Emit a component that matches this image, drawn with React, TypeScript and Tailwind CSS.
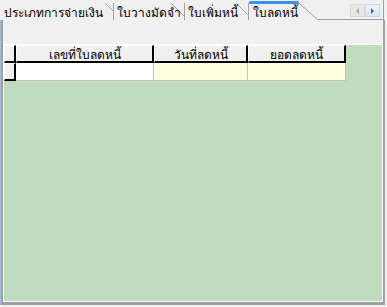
const tabs = [
  { label: "ประเภทการจ่ายเงิน", width: "w-[113px]", edge: "M105 3 L113 11", left: false },
  { label: "ใบวางมัดจำ", width: "w-[71px]", edge: "M58 3 L71 16", left: true },
  { label: "ใบเพิ่มหนี้", width: "w-[64px]", edge: "M52 3 L64 15", left: true },
];

const headers = [
  { label: "เลขที่ใบลดหนี้", width: "w-[138px]", cell: "bg-white" },
  { label: "วันที่ลดหนี้", width: "w-[94px]", cell: "bg-[#ffffe1]" },
  { label: "ยอดลดหนี้", width: "w-[98px]", cell: "bg-[#ffffe1]" },
];

function TabEdges({ d, left }: { d: string; left: boolean }) {
  return (
    <svg className="absolute inset-0 h-full w-full" aria-hidden="true">
      {left && <path d="M0.5 3 L0.5 20" stroke="#a0a0a0" strokeWidth="1" fill="none" />}
      <path d={d} stroke="#a0a0a0" strokeWidth="1" fill="none" />
    </svg>
  );
}

export default function App() {
  return (
    <div className="flex h-[307px] w-[387px] flex-col overflow-hidden bg-[#f0f0f0] font-['Tahoma','Noto_Sans','DejaVu_Sans',sans-serif] text-[12px] leading-none text-black">
      {/* tab strip */}
      <div className="flex h-[20px] shrink-0">
        {tabs.map((t) => (
          <div key={t.label} className={`relative ${t.width} h-[20px] shrink-0`}>
            <TabEdges d={t.edge} left={t.left} />
            <span className="absolute left-[4px] top-[7px] whitespace-nowrap text-[12px]">{t.label}</span>
          </div>
        ))}
        <div className="relative h-[20px] w-[70px] shrink-0">
          <svg className="absolute inset-0 h-full w-full" aria-hidden="true">
            <path d="M0.5 3 L0.5 20" stroke="#a0a0a0" strokeWidth="1" fill="none" />
            <path d="M51 3 L70 20" stroke="#a0a0a0" strokeWidth="1" fill="none" />
            <rect x="1" y="1" width="50" height="3" rx="1.5" fill="#3d8ee6" />
          </svg>
          <span className="absolute left-[5px] top-[7px] whitespace-nowrap text-[12px]">ใบลดหนี้</span>
        </div>
        <div className="flex h-[20px] w-[66px] shrink-0 items-start justify-end border-b border-r border-[#a0a0a0] pr-[3px] pt-[4px]">
          <div className="flex h-[13px] w-[15px] items-center justify-center border border-[#dadada] bg-[#e6e6e6]">
            <span className="h-0 w-0 border-y-[3px] border-r-[3px] border-y-transparent border-r-[#a6a6a6]" />
          </div>
          <div className="flex h-[13px] w-[15px] items-center justify-center border border-[#c9d6e6] bg-gradient-to-b from-[#eef4fb] to-[#d9e6f5]">
            <span className="h-0 w-0 border-y-[3px] border-l-[3px] border-y-transparent border-l-[#3c5fc0]" />
          </div>
        </div>
        <div className="flex-1" />
      </div>

      {/* panel */}
      <div className="flex flex-1">
        <div className="w-[1px] bg-[#aabed6]" />
        <div className="flex w-[384px] flex-col border-x-2 border-b-[3px] border-[#a0a0a0]">
          <div className="h-[24px] shrink-0 bg-[#f0f0f0]" />
          <div className="flex-1 border border-white bg-[#c0dcc0]">
            {/* datasheet */}
            <div className="flex">
              <div className="h-[18px] w-[12px] border-l border-t border-white border-b-2 border-r-2 border-b-black border-r-black bg-[#f0f0f0]" />
              {headers.map((h) => (
                <div
                  key={h.label}
                  className={`${h.width} flex h-[18px] items-center justify-center border-l border-t border-white border-b-2 border-r-2 border-b-black border-r-black bg-[#f0f0f0] pt-[2px] text-[12px]`}
                >
                  {h.label}
                </div>
              ))}
            </div>
            <div className="flex">
              <div className="h-[18px] w-[12px] border-l border-t border-white border-b-2 border-r-2 border-b-black border-r-black bg-[#f0f0f0]" />
              {headers.map((h) => (
                <div key={h.label} className={`${h.width} h-[18px] border-b border-r border-[#c0c0c0] ${h.cell}`} />
              ))}
            </div>
          </div>
        </div>
        <div className="flex-1" />
      </div>
      <div className="h-[2px] shrink-0" />
    </div>
  );
}
